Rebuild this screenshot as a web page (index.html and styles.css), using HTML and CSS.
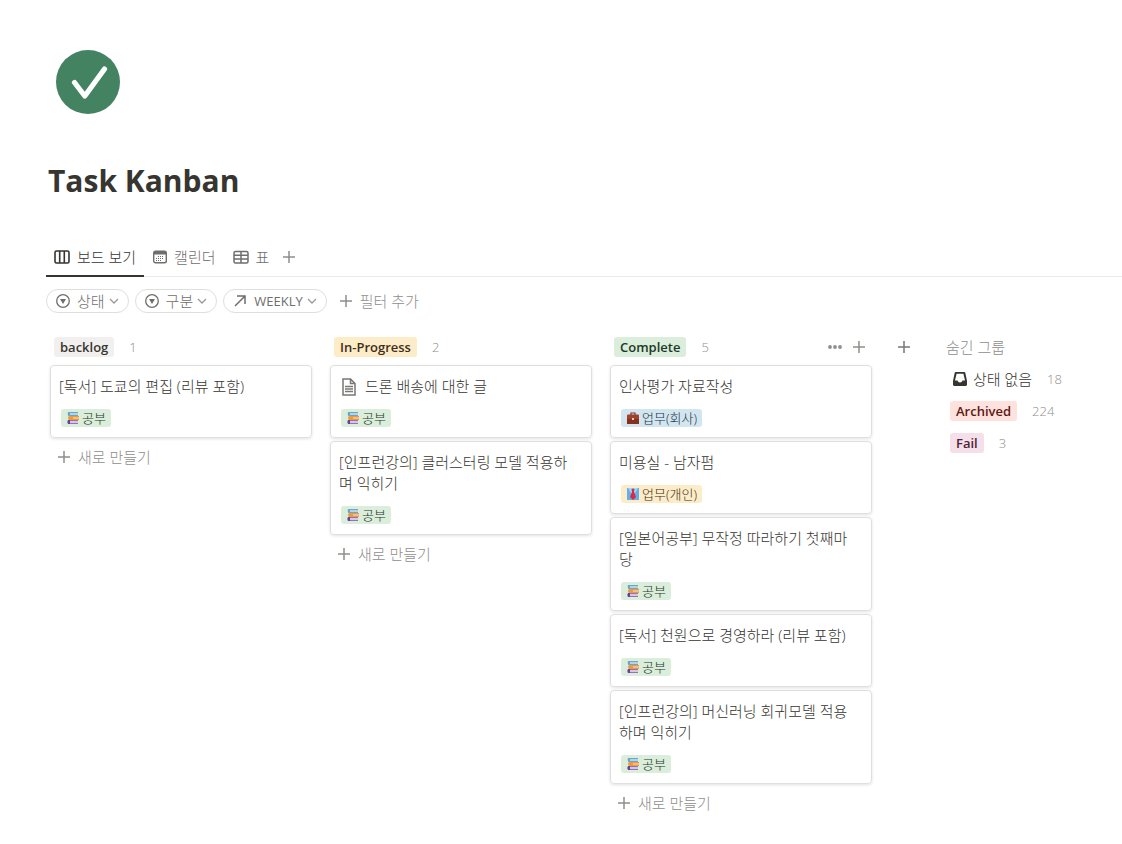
FILE: index.html
```html
<!DOCTYPE html>
<html lang="ko">
<head>
    <meta charset="UTF-8">
    <meta name="viewport" content="width=device-width, initial-scale=1.0">
    <title>Task Kanban</title>
    <link rel="stylesheet" href="styles.css">
</head>
<body>
    <!-- shared icons -->
    <svg class="sprite" aria-hidden="true">
        <symbol id="plus" viewBox="0 0 12 12">
            <path d="M6 0v12M0 6h12" fill="none" stroke="currentColor" stroke-width="1.5"/>
        </symbol>
        <symbol id="chevron" viewBox="0 0 10 10">
            <path d="M1 3l4 4 4-4" fill="none" stroke="currentColor" stroke-width="1.3"/>
        </symbol>
        <symbol id="select" viewBox="0 0 14 14">
            <circle cx="7" cy="7" r="6.3" fill="none" stroke="currentColor" stroke-width="1.3"/>
            <path d="M4 5h6L7 10z" fill="currentColor"/>
        </symbol>
        <symbol id="books" viewBox="0 0 12 12">
            <path d="M1 0h10v4H1z" fill="#b3d3e6"/>
            <path d="M1 0h10v1H3v2h8v1H1.500Q0 2 1 0z" fill="#6aa5cb"/>
            <path d="M2 4h10v4H2z" fill="#f2bd8a"/>
            <path d="M2 4h10v1H6v2h6v1H2Q0 6 2 4z" fill="#ef9a38"/>
            <path d="M1 8h10v4H1z" fill="#d2c8e2"/>
            <path d="M1 8h10v1H3v2h8v1H1Q0 10 1 8z" fill="#9273b8"/>
            <path d="M1 8h2v4H1Q0 10 1 8z" fill="#6a3fa0"/>
        </symbol>
    </svg>

    <header class="page-header">
        <svg class="page-icon" viewBox="0 0 64 64" aria-hidden="true">
            <circle cx="32" cy="32" r="32" fill="#448361"/>
            <path d="M18.500 32.500L28.800 46 48.500 19" fill="none" stroke="#fff" stroke-width="5.200" stroke-linecap="round" stroke-linejoin="round"/>
        </svg>
        <h1>Task Kanban</h1>
    </header>

    <nav class="tabs">
        <button class="tab active">
            <svg width="16" height="14" viewBox="0 0 16 14"><path d="M2.500 1h11Q15 1 15 2.500v9Q15 13 13.500 13h-11Q1 13 1 11.500v-9Q1 1 2.500 1zM5.700 1v12M10.300 1v12" fill="none" stroke="currentColor" stroke-width="1.600"/></svg>
            보드 보기
        </button>
        <button class="tab">
            <svg width="14" height="14" viewBox="0 0 14 14"><rect x="0.700" y="1.200" width="12.600" height="11.600" rx="1.800" fill="none" stroke="currentColor" stroke-width="1.400"/><path d="M1 1.500h12v3H1z" fill="currentColor"/><path d="M5 6.500h6M3 8.500h8M3 10.500h6" stroke="currentColor" stroke-dasharray="1 1"/></svg>
            캘린더
        </button>
        <button class="tab">
            <svg width="16" height="14" viewBox="0 0 16 14"><path d="M2.500 1.500h11Q15 1.500 15 3v8.500Q15 13 13.500 13h-11Q1 13 1 11.500V3Q1 1.500 2.500 1.500zM8 1.500V13M1 5.300h14M1 9h14" fill="none" stroke="currentColor" stroke-width="1.500"/></svg>
            표
        </button>
        <button class="icon-button" aria-label="보기 추가"><svg width="12" height="12"><use href="#plus"/></svg></button>
    </nav>

    <div class="filters">
        <button class="pill"><svg width="14" height="14"><use href="#select"/></svg><span>상태</span><svg class="chevron" width="10" height="10"><use href="#chevron"/></svg></button>
        <button class="pill"><svg width="14" height="14"><use href="#select"/></svg><span>구분</span><svg class="chevron" width="10" height="10"><use href="#chevron"/></svg></button>
        <button class="pill latin"><svg width="14" height="14" viewBox="0 0 14 14"><path d="M2 12L11.500 2.500M4 2h8v8" fill="none" stroke="currentColor" stroke-width="1.500"/></svg><span>WEEKLY</span><svg class="chevron" width="10" height="10"><use href="#chevron"/></svg></button>
        <button class="add-filter"><svg width="12" height="12"><use href="#plus"/></svg>필터 추가</button>
    </div>

    <main class="board">
        <section class="column">
            <div class="column-header"><h2 class="status gray">backlog</h2><span class="count">1</span></div>
            <article class="card">
                <h3>[독서] 도쿄의 편집 (리뷰 포함)</h3>
                <span class="tag green"><svg width="12" height="12"><use href="#books"/></svg>공부</span>
            </article>
            <button class="new-card"><svg width="12" height="12"><use href="#plus"/></svg>새로 만들기</button>
        </section>

        <section class="column">
            <div class="column-header"><h2 class="status yellow">In-Progress</h2><span class="count">2</span></div>
            <article class="card">
                <h3 class="with-icon"><svg width="14" height="18" viewBox="0 0 14 18"><path d="M1 1h7.500L13 5.500V17H1zM8.500 1v4.500H13" fill="none" stroke="currentColor" stroke-width="1.500"/><path d="M3 8.500h8M3 11h8M3 13.500h8" stroke="currentColor" stroke-width="1.300"/></svg>드론 배송에 대한 글</h3>
                <span class="tag green"><svg width="12" height="12"><use href="#books"/></svg>공부</span>
            </article>
            <article class="card">
                <h3>[인프런강의] 클러스터링 모델 적용하며 익히기</h3>
                <span class="tag green"><svg width="12" height="12"><use href="#books"/></svg>공부</span>
            </article>
            <button class="new-card"><svg width="12" height="12"><use href="#plus"/></svg>새로 만들기</button>
        </section>

        <section class="column">
            <div class="column-header">
                <h2 class="status green">Complete</h2><span class="count">5</span>
                <div class="column-actions">
                    <button class="icon-button" aria-label="더 보기"><svg width="14" height="12" viewBox="0 0 14 12"><g fill="currentColor"><circle cx="2" cy="6" r="1.900"/><circle cx="7" cy="6" r="1.900"/><circle cx="12" cy="6" r="1.900"/></g></svg></button>
                    <button class="icon-button" aria-label="카드 추가"><svg width="12" height="12"><use href="#plus"/></svg></button>
                </div>
            </div>
            <article class="card">
                <h3>인사평가 자료작성</h3>
                <span class="tag blue"><svg width="12" height="12" viewBox="0 0 12 12"><path d="M4 3V1h4v2" fill="none" stroke="#7d3527" stroke-width="1.200"/><rect y="2.500" width="12" height="9.500" rx="1" fill="#a0412d"/><path d="M0 7h12v5H0z" fill="#86301f"/><path d="M5 6h2v2H5z" fill="#eccdb8"/></svg>업무(회사)</span>
            </article>
            <article class="card">
                <h3>미용실 - 남자펌</h3>
                <span class="tag yellow"><svg width="12" height="12" viewBox="0 0 12 12"><path d="M0 0h12v12H0z" fill="#62b0e8"/><path d="M1 0h4l1 2 1-2h4L8 5H4z" fill="#a7d5f5"/><path d="M4.500 1h3L7 4l2 5-3 3-3-3 2-5z" fill="#dc2945"/></svg>업무(개인)</span>
            </article>
            <article class="card">
                <h3>[일본어공부] 무작정 따라하기 첫째마당</h3>
                <span class="tag green"><svg width="12" height="12"><use href="#books"/></svg>공부</span>
            </article>
            <article class="card">
                <h3>[독서] 천원으로 경영하라 (리뷰 포함)</h3>
                <span class="tag green"><svg width="12" height="12"><use href="#books"/></svg>공부</span>
            </article>
            <article class="card">
                <h3>[인프런강의] 머신러닝 회귀모델 적용하며 익히기</h3>
                <span class="tag green"><svg width="12" height="12"><use href="#books"/></svg>공부</span>
            </article>
            <button class="new-card"><svg width="12" height="12"><use href="#plus"/></svg>새로 만들기</button>
        </section>

        <button class="icon-button add-group" aria-label="그룹 추가"><svg width="12" height="12"><use href="#plus"/></svg></button>

        <aside class="hidden-groups">
            <h2>숨긴 그룹</h2>
            <ul>
                <li>
                    <span class="no-status"><svg width="14" height="14" viewBox="0 0 14 14"><path fill-rule="evenodd" d="M2.500 0h9l.8.700L14 9v4l-1 1H1l-1-1V9L1.700.700zM3.600 1.800L2 8.500h2.500Q5 10.500 7 10.500T9.500 8.500H12L10.400 1.800z" fill="currentColor"/></svg>상태 없음</span>
                    <span class="count">18</span>
                </li>
                <li><span class="status red">Archived</span><span class="count">224</span></li>
                <li><span class="status pink">Fail</span><span class="count">3</span></li>
            </ul>
        </aside>
    </main>
</body>
</html>
```

FILE: styles.css
```css
* {
    box-sizing: border-box;
}
body {
    margin: 0;
    padding: 50px 0 24px 46px;
    font-family: "Open Sans", "Noto Sans CJK KR", sans-serif;
    font-size: 15px;
    font-weight: 300;
    line-height: 20px;
    color: #37352f;
    background-color: #ffffff;
}
h1, h2, h3, ul {
    margin: 0;
    padding: 0;
}
svg {
    flex: none;
}
button {
    display: flex;
    align-items: center;
    padding: 0;
    border: none;
    background: none;
    font: inherit;
    color: #8f8e8b;
    white-space: nowrap;
    cursor: pointer;
}
.sprite {
    position: absolute;
    width: 0;
    height: 0;
}

/* title */
.page-icon {
    display: block;
    width: 64px;
    height: 64px;
    margin-left: 10px;
}
h1 {
    margin: 46px 0 0 2px;
    font-size: 30px;
    line-height: 42px;
    font-weight: 700;
}

/* view tabs */
.tabs {
    display: flex;
    gap: 1px;
    margin-top: 36px;
    height: 39px;
    border-bottom: 1px solid #e9e9e7;
}
.tab {
    gap: 7px;
    height: 39px;
    padding: 0 8px;
    border-bottom: 2px solid transparent;
    color: #6f6e6b;
}
.tab.active {
    border-color: #37352f;
    color: #37352f;
}
.tabs .icon-button {
    margin-left: 5px;
}

/* filters */
.filters {
    display: flex;
    gap: 6px;
    margin-top: 12px;
}
.pill {
    height: 24px;
    padding: 0 9px;
    border: 1px solid #dededc;
    border-radius: 12px;
    color: #6f6e6b;
}
.pill span {
    margin: 0 4px 0 7px;
}
.latin {
    font-size: 13px;
    font-weight: 400;
}
.chevron {
    color: #9b9a97;
}
.add-filter {
    gap: 8px;
    margin-left: 7px;
}

/* board */
.board {
    display: flex;
    align-items: flex-start;
    margin: 22px 0 0 4px;
}
.column {
    flex: none;
    width: 262px;
    margin-right: 18px;
}
.column-header {
    display: flex;
    align-items: center;
    height: 24px;
    margin-bottom: 6px;
    padding: 0 7px 0 4px;
}
.status {
    padding: 0 6px;
    border-radius: 3px;
    font-size: 13px;
    line-height: 20px;
    font-weight: 600;
}
.count {
    margin-left: 15px;
    font-size: 13px;
    color: #8f8e8b;
}
.column-actions {
    display: flex;
    gap: 11px;
    margin-left: auto;
}
.card {
    display: flex;
    flex-direction: column;
    align-items: flex-start;
    gap: 12px;
    margin-bottom: 3px;
    padding: 10px;
    border: 1px solid #dfdfde;
    border-radius: 4px;
    box-shadow: 0 1px 3px rgba(15, 15, 15, 0.12);
}
.card h3 {
    margin-left: -2px;
    font-size: 15px;
    line-height: 21px;
    font-weight: 300;
}
.card .with-icon {
    display: flex;
    align-items: center;
    gap: 9px;
    margin-left: 1px;
}
.with-icon svg {
    color: #787774;
}
.tag {
    display: flex;
    align-items: center;
    gap: 3px;
    padding: 0 5px 0 6px;
    border-radius: 3px;
    font-size: 13px;
    line-height: 18px;
}
.gray {
    background-color: #f1f0ef;
}
.green {
    background-color: #dbeddb;
    color: #1c3829;
}
.yellow {
    background-color: #fdecc8;
    color: #402c1b;
}
.blue {
    background-color: #d3e5ef;
    color: #183347;
}
.red {
    background-color: #ffe2dd;
    color: #5d1715;
}
.pink {
    background-color: #f5e0e9;
    color: #4c2337;
}
.new-card {
    gap: 8px;
    margin-top: 9px;
    padding-left: 8px;
}
.add-group {
    height: 24px;
    margin-left: 8px;
    color: #787774;
}

/* hidden groups */
.hidden-groups {
    margin-left: 36px;
    white-space: nowrap;
}
.hidden-groups h2 {
    font-size: 15px;
    line-height: 24px;
    font-weight: 300;
    color: #8f8e8b;
}
.hidden-groups ul {
    margin-top: 4px;
    padding-left: 4px;
    list-style: none;
}
.hidden-groups li {
    display: flex;
    align-items: center;
    height: 32px;
}
.no-status {
    display: flex;
    align-items: center;
    gap: 6px;
    padding-left: 3px;
}
```
